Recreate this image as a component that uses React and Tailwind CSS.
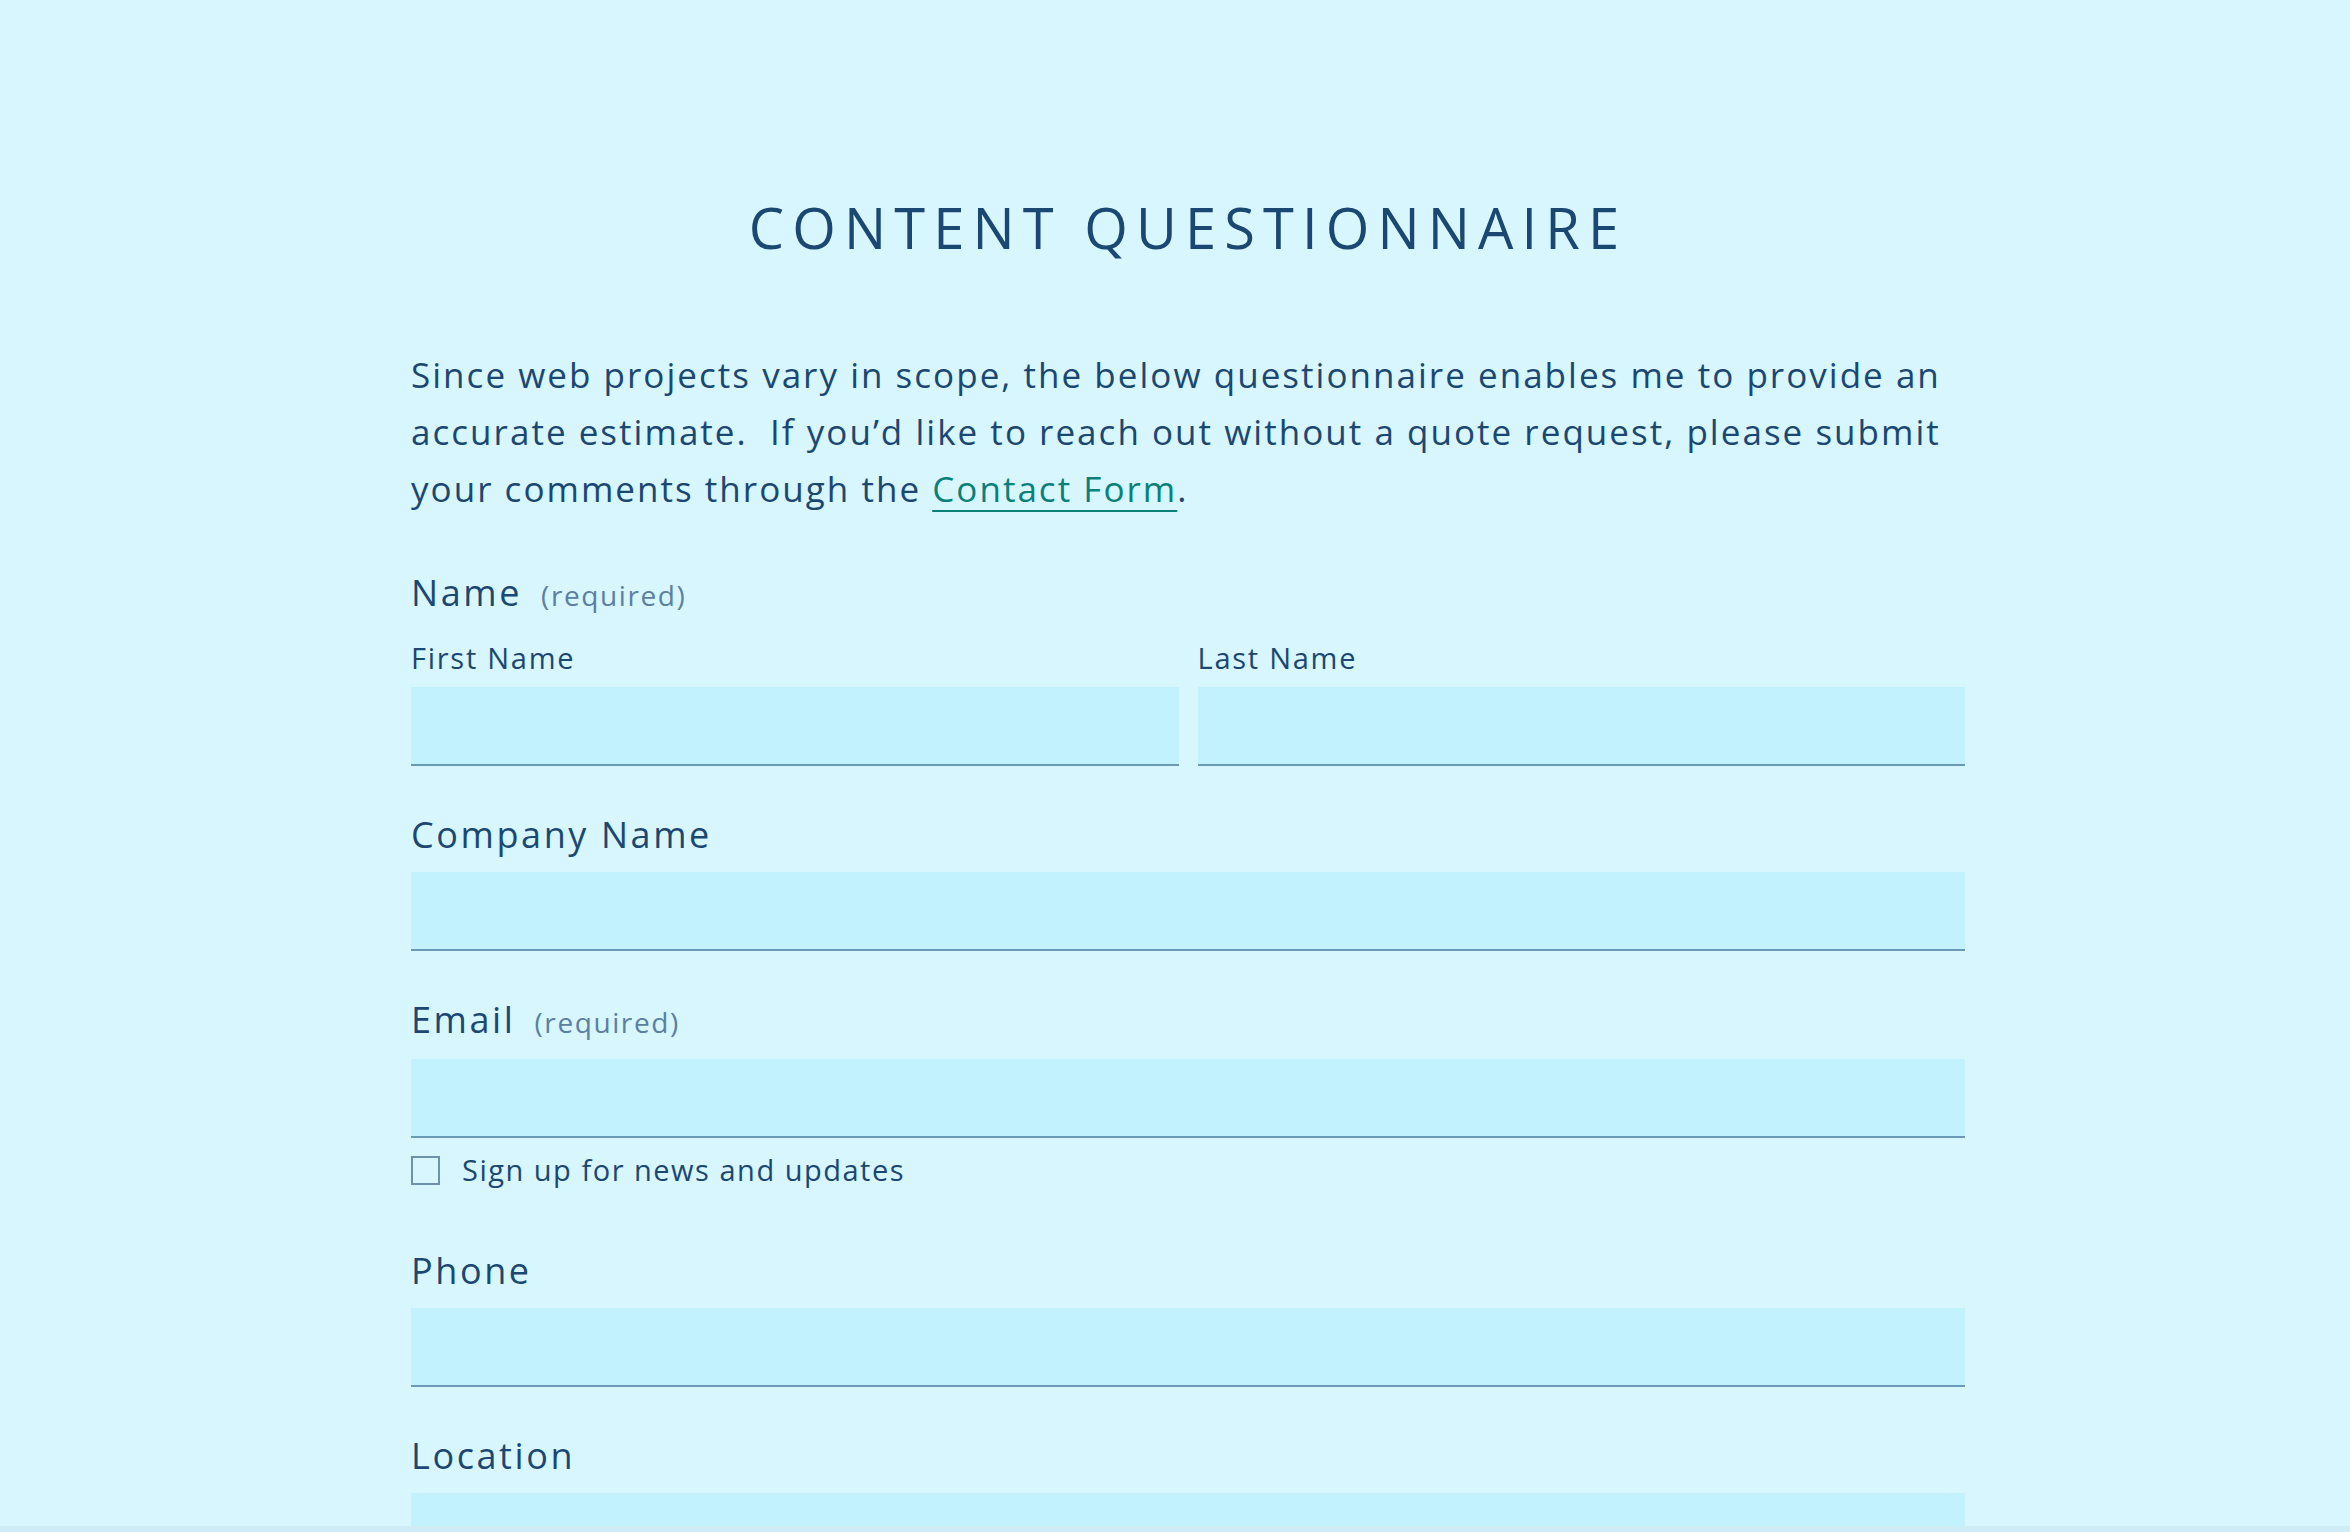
import React from 'react';

const Label = ({ children, required }) => (
  <div className="flex items-baseline text-[36px] leading-[42px] tracking-[0.072em] text-[#1b4872]">
    <span>{children}</span>
    {required && (
      <span className="ml-[19px] text-[28px] tracking-[0.057em] text-[#5a80a2]">(required)</span>
    )}
  </div>
);

const Input = ({ className = '' }) => (
  <input
    type="text"
    className={`block h-[79px] w-full border-b-2 border-[#6a9ab6] bg-[#c2f2fd] px-4 outline-none ${className}`}
  />
);

const Field = ({ label, required, children }) => (
  <div>
    <Label required={required}>{label}</Label>
    <Input className="mt-4" />
    {children}
  </div>
);

const App = () => {
  return (
    <div
      className="flex h-[1532px] flex-col overflow-hidden bg-[#d8f6fe] text-[#1b4872]"
      style={{ fontFamily: '"Open Sans", "Liberation Sans", sans-serif' }}
    >
      <div className="flex-1 overflow-hidden">
        <div className="ml-[411px] w-[1554px] pt-[192px]">
          <h1 className="text-center text-[56px] font-normal leading-[70px] tracking-[0.145em] text-[#1b4872]">
            CONTENT QUESTIONNAIRE
          </h1>

          <p className="mt-[84px] text-[35px] leading-[57px] tracking-[0.058em]">
            Since web projects vary in scope, the below questionnaire enables me to provide an
            <br />
            accurate estimate.&nbsp; If you’d like to reach out without a quote request, please submit
            <br />
            your comments through the{' '}
            <a href="#" className="text-[#0a807b] underline decoration-2 underline-offset-[8px]">
              Contact Form
            </a>
            .
          </p>

          <form className="mt-[55px] flex flex-col gap-12">
            <div>
              <Label required>Name</Label>
              <div className="mt-[25px] grid grid-cols-2 gap-[19px]">
                <div>
                  <div className="text-[29px] leading-[34px] tracking-[0.06em]">First Name</div>
                  <Input className="mt-3" />
                </div>
                <div>
                  <div className="text-[29px] leading-[34px] tracking-[0.06em]">Last Name</div>
                  <Input className="mt-3" />
                </div>
              </div>
            </div>

            <Field label="Company Name" />

            <Field label="Email" required>
              <label className="mt-[15px] mb-[15px] flex items-center text-[29px] leading-[34px] tracking-[0.052em]">
                <span className="block h-[29px] w-[29px] border-2 border-[#6e92ae]" />
                <span className="ml-[22px]">Sign up for news and updates</span>
              </label>
            </Field>

            <Field label="Phone" />

            <Field label="Location" />
          </form>
        </div>
      </div>
      <div className="h-[6px] shrink-0 bg-[#ceedf6]" />
    </div>
  );
};

export default App;
